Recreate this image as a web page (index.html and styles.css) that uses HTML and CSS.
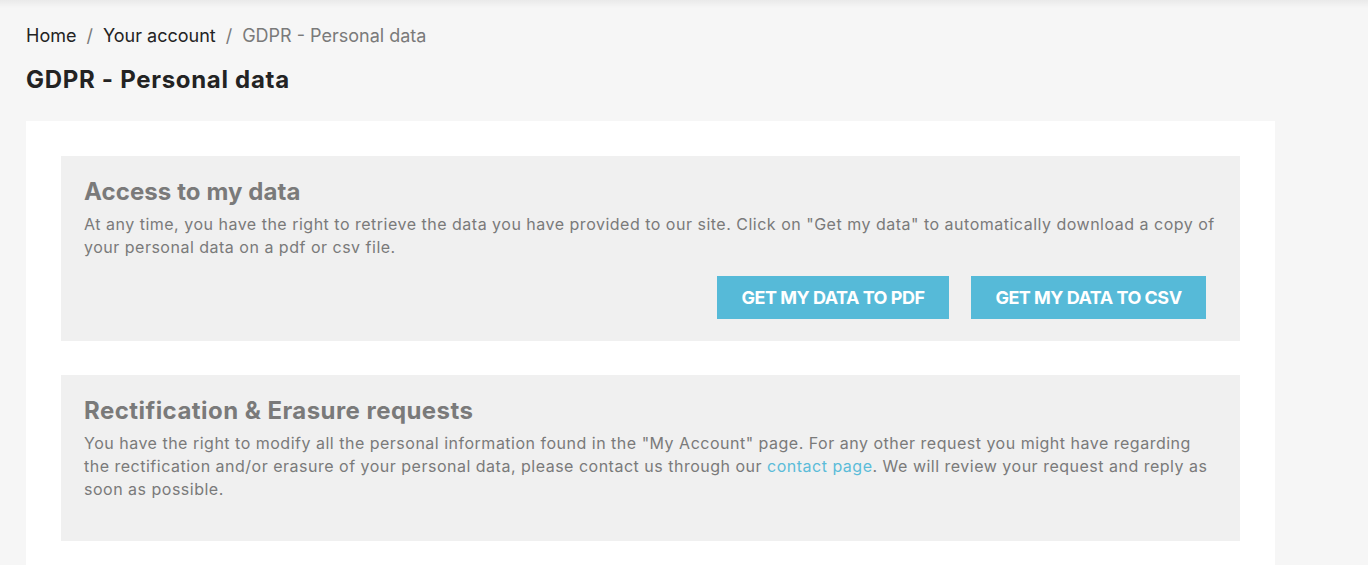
FILE: index.html
```html
<!DOCTYPE html>
<html lang="en">
<head>
<meta charset="utf-8">
<title>GDPR - Personal data</title>
<link rel="stylesheet" href="styles.css">
</head>
<body>
<div class="topshade"></div>
<main class="page">
  <nav class="breadcrumb">
    <a href="#">Home</a><span class="sep">/</span><a href="#">Your account</a><span class="sep">/</span><span class="current">GDPR - Personal data</span>
  </nav>
  <h1 class="page-title">GDPR - Personal data</h1>
  <section class="card">
    <div class="panel panel-access">
      <h2 class="panel-title">Access to my data</h2>
      <p class="panel-text">At any time, you have the right to retrieve the data you have provided to our site. Click on "Get my data" to automatically download a copy of your personal data on a pdf or csv file.</p>
      <div class="actions">
        <a class="btn" href="#">GET MY DATA TO PDF</a>
        <a class="btn" href="#">GET MY DATA TO CSV</a>
      </div>
    </div>
    <div class="panel panel-rect">
      <h2 class="panel-title">Rectification <span class="amp">&amp;</span> Erasure requests</h2>
      <p class="panel-text">You have the right to modify all the personal information found in the "My Account" page. For any other request you might have regarding the rectification and/or erasure of your personal data, please contact us through our <a class="link" href="#">contact page</a>. We will review your request and reply as soon as possible.</p>
    </div>
  </section>
</main>
</body>
</html>
```

FILE: styles.css
```css
* { box-sizing: border-box; }
html, body { margin: 0; padding: 0; }
body {
  background: #f6f6f6;
  font-family: Inter, "Noto Sans", sans-serif;
  color: #232323;
  height: 565px;
  overflow: hidden;
  position: relative;
}
.topshade {
  position: absolute;
  left: 0; right: 0; top: 0;
  height: 8px;
  background: linear-gradient(to bottom, rgba(0,0,0,0.05), rgba(0,0,0,0));
}
.page {
  padding: 23px 0 0 26px;
  width: 1275px;
}
.breadcrumb {
  font-size: 18px;
  line-height: 26px;
  display: flex;
  align-items: center;
}
.breadcrumb a { color: #232323; text-decoration: none; }
.breadcrumb .sep { color: #7a7a7a; margin: 0 10px; }
.breadcrumb .current { color: #7a7a7a; }
.page-title {
  margin: 16px 0 0 0;
  font-size: 24px;
  line-height: 30px;
  font-weight: 700;
  color: #232323;
  letter-spacing: 0.7px;
}
.card {
  margin-top: 26px;
  background: #fff;
  padding: 35px 35px 30px 35px;
  display: flex;
  flex-direction: column;
  gap: 34px;
}
.panel {
  background: #f0f0f0;
  padding: 20px 23px 22px 23px;
}
.panel-rect { padding-bottom: 40px; }
.panel-title {
  margin: 0;
  font-size: 24px;
  line-height: 32px;
  font-weight: 700;
  color: #7a7a7a;
  letter-spacing: 0.1px;
}
.panel-rect .panel-title { letter-spacing: 0.45px; }
.panel-text {
  margin: 5px 0 0 0;
  font-size: 16px;
  line-height: 23px;
  color: #7a7a7a;
  letter-spacing: 0.5px;
}
.link { color: #5bbcd9; text-decoration: none; }
.actions {
  display: flex;
  justify-content: flex-end;
  gap: 22px;
  margin-top: 17px;
  padding-right: 11px;
}
.btn {
  display: flex;
  align-items: center;
  justify-content: center;
  width: 232px;
  height: 43px;
  background: #56bad8;
  color: #fff;
  text-decoration: none;
  font-weight: 700;
  font-size: 18px;
  letter-spacing: -0.5px;
}
.btn + .btn { width: 235px; }
```
